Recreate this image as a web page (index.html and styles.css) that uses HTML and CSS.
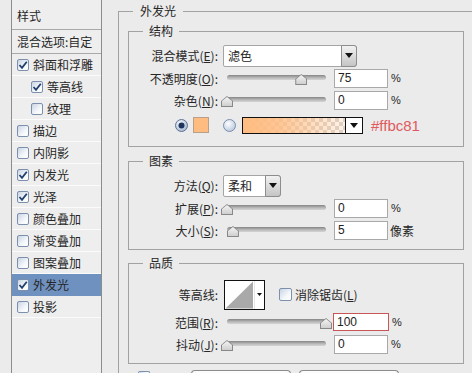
FILE: index.html
```html
<!DOCTYPE html>
<html lang="zh-CN">
<head>
<meta charset="utf-8">
<link rel="stylesheet" href="styles.css">
</head>
<body>
<div class="dialog">
  <div class="styles-panel">
    <div class="sp-head">样式</div>
    <div class="sp-blend">混合选项:自定</div>
    <ul class="sp-list">
      <li class="sp-item"><span class="cb on"><svg width="10" height="10" viewBox="0 0 10 10"><path d="M1.5 5 L4 7.8 L8.8 1.8" fill="none" stroke="#1f3f6e" stroke-width="1.8"/></svg></span>斜面和浮雕</li>
      <li class="sp-item sub"><span class="cb on"><svg width="10" height="10" viewBox="0 0 10 10"><path d="M1.5 5 L4 7.8 L8.8 1.8" fill="none" stroke="#1f3f6e" stroke-width="1.8"/></svg></span>等高线</li>
      <li class="sp-item sub"><span class="cb"></span>纹理</li>
      <li class="sp-item"><span class="cb"></span>描边</li>
      <li class="sp-item"><span class="cb"></span>内阴影</li>
      <li class="sp-item"><span class="cb on"><svg width="10" height="10" viewBox="0 0 10 10"><path d="M1.5 5 L4 7.8 L8.8 1.8" fill="none" stroke="#1f3f6e" stroke-width="1.8"/></svg></span>内发光</li>
      <li class="sp-item"><span class="cb on"><svg width="10" height="10" viewBox="0 0 10 10"><path d="M1.5 5 L4 7.8 L8.8 1.8" fill="none" stroke="#1f3f6e" stroke-width="1.8"/></svg></span>光泽</li>
      <li class="sp-item"><span class="cb"></span>颜色叠加</li>
      <li class="sp-item"><span class="cb"></span>渐变叠加</li>
      <li class="sp-item"><span class="cb"></span>图案叠加</li>
      <li class="sp-item active"><span class="cb on"><svg width="10" height="10" viewBox="0 0 10 10"><path d="M1.5 5 L4 7.8 L8.8 1.8" fill="none" stroke="#1f3f6e" stroke-width="1.8"/></svg></span>外发光</li>
      <li class="sp-item"><span class="cb"></span>投影</li>
    </ul>
  </div>

  <fieldset class="group outer">
    <legend>外发光</legend>

    <fieldset class="group sec sec-structure">
      <legend>结构</legend>
      <div class="row row-sel">
        <span class="lbl">混合模式(<u>E</u>):</span>
        <div class="select sel-wide"><span class="sel-text">滤色</span><span class="sel-btn"><i class="tri"></i></span></div>
      </div>
      <div class="row">
        <span class="lbl">不透明度(<u>O</u>):</span>
        <div class="slider"><div class="track"></div><span class="thumb" style="left:75%"></span></div>
        <div class="num">75</div><span class="unit">%</span>
      </div>
      <div class="row">
        <span class="lbl">杂色(<u>N</u>):</span>
        <div class="slider"><div class="track"></div><span class="thumb" style="left:0%"></span></div>
        <div class="num">0</div><span class="unit">%</span>
      </div>
      <div class="row row-color">
        <svg class="radio" width="13" height="13" viewBox="0 0 13 13"><defs><radialGradient id="rg1" cx="0.4" cy="0.35" r="0.7"><stop offset="0" stop-color="#ffffff"/><stop offset="1" stop-color="#9fb2cc"/></radialGradient></defs><circle cx="6.5" cy="6.5" r="6" fill="url(#rg1)" stroke="#5f7598"/><circle cx="6.5" cy="6.5" r="3" fill="#1c355c"/></svg>
        <span class="swatch"></span>
        <svg class="radio radio2" width="13" height="13" viewBox="0 0 13 13"><defs><radialGradient id="rg2" cx="0.4" cy="0.35" r="0.7"><stop offset="0" stop-color="#ffffff"/><stop offset="1" stop-color="#b6c6dc"/></radialGradient></defs><circle cx="6.5" cy="6.5" r="6" fill="url(#rg2)" stroke="#7a8fae"/></svg>
        <div class="gradbox"><span class="grad-btn"><i class="tri"></i></span></div>
        <span class="hex">#ffbc81</span>
      </div>
    </fieldset>

    <fieldset class="group sec sec-elements">
      <legend>图素</legend>
      <div class="row row-sel">
        <span class="lbl">方法(<u>Q</u>):</span>
        <div class="select sel-narrow"><span class="sel-text">柔和</span><span class="sel-btn"><i class="tri"></i></span></div>
      </div>
      <div class="row">
        <span class="lbl">扩展(<u>P</u>):</span>
        <div class="slider"><div class="track"></div><span class="thumb" style="left:0%"></span></div>
        <div class="num">0</div><span class="unit">%</span>
      </div>
      <div class="row">
        <span class="lbl">大小(<u>S</u>):</span>
        <div class="slider"><div class="track"></div><span class="thumb" style="left:6%"></span></div>
        <div class="num">5</div><span class="unit unit-cjk">像素</span>
      </div>
    </fieldset>

    <fieldset class="group sec sec-quality">
      <legend>品质</legend>
      <div class="row row-contour">
        <span class="lbl">等高线:</span>
        <svg class="contour" width="41" height="30" viewBox="0 0 41 30">
          <rect x="0.5" y="0.5" width="40" height="29" fill="#ffffff" stroke="#111"/>
          <polygon points="1.5,28.5 29,1.5 29,28.5" fill="#a9a9a9"/>
          <line x1="30.5" y1="1" x2="30.5" y2="29" stroke="#e6e6e6"/>
          <polygon points="33,13 38,13 35.5,16" fill="#111"/>
        </svg>
        <span class="cb cb-aa"></span>
        <span class="aa-lbl">消除锯齿(<u>L</u>)</span>
      </div>
      <div class="row">
        <span class="lbl">范围(<u>R</u>):</span>
        <div class="slider"><div class="track"></div><span class="thumb" style="left:100%"></span></div>
        <div class="num num-focus">100</div><span class="unit">%</span>
      </div>
      <div class="row">
        <span class="lbl">抖动(<u>J</u>):</span>
        <div class="slider"><div class="track"></div><span class="thumb" style="left:0%"></span></div>
        <div class="num">0</div><span class="unit">%</span>
      </div>
    </fieldset>

    <div class="bottom-row">
      <span class="cb cb-bottom"></span>
      <span class="btn"></span>
      <span class="btn"></span>
    </div>
  </fieldset>
</div>
</body>
</html>
```
FILE: styles.css
```css
* { box-sizing: border-box; }
html, body { margin: 0; padding: 0; }
body {
  background: #ebebeb;
  font-family: "Noto Sans CJK SC", "Noto Sans", sans-serif;
  font-size: 12px;
  color: #262626;
  width: 472px;
  height: 373px;
  overflow: hidden;
}
.dialog { display: flex; align-items: flex-start; height: 373px; }

/* left styles list */
.styles-panel {
  flex: none;
  margin-left: 11px;
  width: 91px;
  height: 373px;
  border: 1px solid #8c8c8c;
  border-top: 0;
  border-bottom: 0;
  background: #eeeeee;
}
.sp-head {
  height: 30px;
  line-height: 32px;
  padding-left: 5px;
  border-bottom: 1px solid #a9a9a9;
}
.sp-blend {
  height: 24px;
  line-height: 23px;
  padding-left: 5px;
  border-bottom: 1px solid #a9a9a9;
  white-space: nowrap;
}
.sp-list { list-style: none; margin: 0; padding: 0; }
.sp-item {
  height: 22px;
  display: flex;
  align-items: center;
  gap: 4px;
  padding-left: 5px;
  border-bottom: 1px solid #fbfbfb;
  white-space: nowrap;
}
.sp-item.sub { padding-left: 19px; }
.sp-item.active { background: #6f91c0; border-bottom-color: #6f91c0; }

.cb {
  flex: none;
  width: 12px;
  height: 12px;
  border: 1px solid #7c90ad;
  border-radius: 2px;
  background: linear-gradient(135deg, #c9d4e3 0%, #f4f7fb 60%, #ffffff 100%);
  display: inline-flex;
  align-items: center;
  justify-content: center;
}
.cb svg { display: block; }

/* group boxes */
.group {
  border: 1px solid #a2a2a2;
  margin: 0;
  padding: 0;
  min-width: 0;
}
.group > legend {
  padding: 0 7px;
  margin-left: 14px;
  line-height: 14px;
  font-size: 12px;
}
.outer {
  flex: none;
  margin: 4px 0 0 16px;
  width: 354px;
  height: 369px;
  padding: 6px 0 0 0;
  border-right: 0;
  border-bottom: 0;
}
.sec { width: 336px; margin-left: 9px; }
.sec > legend { padding: 0 6px; }
.sec-structure { padding: 6px 0 9px 0; }
.sec-elements { margin-top: 7px; padding: 6px 0 8px 0; }
.sec-quality { margin-top: 6px; padding: 8px 0 8px 0; }

.row { display: flex; align-items: center; height: 22px; white-space: nowrap; }
.row-sel { height: 23px; }
.row-color { height: 24px; margin-top: 2px; padding-left: 46px; }
.row-contour { height: 33px; }

.lbl { flex: none; width: 89px; text-align: right; }
.lbl u, .aa-lbl u { text-decoration: underline; }

/* select */
.select {
  flex: none;
  margin-left: 5px;
  height: 22px;
  display: flex;
  background: #ffffff;
  border: 1px solid #a5a5a5;
  border-radius: 2px 3px 3px 2px;
}
.sel-wide { width: 134px; }
.sel-narrow { width: 58px; }
.sel-text { flex: 1; padding-left: 4px; line-height: 20px; }
.sel-btn {
  flex: none;
  width: 16px;
  margin: -1px -1px -1px 0;
  border: 1px solid #8d8d8d;
  border-radius: 0 3px 3px 0;
  background: linear-gradient(#f2f2f2, #c4c4c4);
  display: flex;
  align-items: center;
  justify-content: center;
}
.tri {
  display: block;
  width: 0;
  height: 0;
  border-left: 4px solid transparent;
  border-right: 4px solid transparent;
  border-top: 5px solid #111;
}

/* slider */
.slider {
  flex: none;
  position: relative;
  margin-left: 9px;
  width: 99px;
  height: 22px;
  padding-top: 8px;
}
.track {
  height: 5px;
  border-radius: 3px;
  background: linear-gradient(#858585, #bdbdbd 60%, #d4d4d4);
}
.thumb {
  position: absolute;
  top: 7px;
  width: 12px;
  height: 11px;
  margin-left: -6px;
  background: #888888;
  clip-path: polygon(50% 0, 100% 45%, 100% 100%, 0 100%, 0 45%);
}
.thumb::after {
  content: "";
  position: absolute;
  left: 1px; top: 1px; right: 1px; bottom: 1px;
  background: linear-gradient(#f4f4f4, #cfcfcf);
  clip-path: polygon(50% 0, 100% 45%, 100% 100%, 0 100%, 0 45%);
}

/* numeric inputs */
.num {
  flex: none;
  margin-left: 8px;
  width: 54px;
  height: 19px;
  background: #ffffff;
  border: 1px solid #a9a9a9;
  padding-left: 3px;
  font-family: "Liberation Sans", Arial, sans-serif;
  font-size: 12px;
  line-height: 17px;
  color: #222;
}
.num-focus { border-color: #c95656; margin-left: 7px; width: 56px; height: 18px; }
.unit {
  margin-left: 3px;
  font-family: "Liberation Sans", Arial, sans-serif;
  font-size: 11px;
}
.unit-cjk { font-family: "Noto Sans CJK SC", sans-serif; font-size: 12px; margin-left: 2px; }

/* color row */
.radio { flex: none; display: block; }
.swatch {
  flex: none;
  margin-left: 5px;
  width: 16px;
  height: 16px;
  background: #ffbc81;
  border: 1px solid #b9a08a;
}
.radio2 { margin-left: 14px; }
.gradbox {
  flex: none;
  margin-left: 6px;
  width: 121px;
  height: 17px;
  border: 1px solid #111;
  display: flex;
  justify-content: flex-end;
  background:
    linear-gradient(to right, #ffbc81 0%, rgba(255,188,129,0.85) 30%, rgba(255,188,129,0) 100%),
    conic-gradient(#d6d6d6 25%, #ffffff 0 50%, #d6d6d6 0 75%, #ffffff 0) 0 0 / 8px 8px;
}
.grad-btn {
  width: 17px;
  background: #ffffff;
  border-left: 1px solid #111;
  display: flex;
  align-items: center;
  justify-content: center;
}
.hex {
  margin-left: 8px;
  font-family: "Liberation Sans", Arial, sans-serif;
  font-size: 15px;
  color: #e05a5e;
}

/* quality */
.contour { flex: none; display: block; margin-left: 6px; }
.cb-aa { margin-left: 14px; width: 13px; height: 13px; }
.aa-lbl { margin-left: 3px; }

/* tops of the controls below the visible area */
.bottom-row { display: flex; align-items: flex-start; margin-top: 6px; height: 4px; }
.cb-bottom { margin-left: 19px; margin-top: 1px; height: 3px; border-bottom: 0; border-radius: 2px 2px 0 0; }
.btn {
  flex: none;
  width: 100px;
  height: 4px;
  border: 1px solid #8a8a8a;
  border-bottom: 0;
  border-radius: 4px 4px 0 0;
  background: linear-gradient(#ffffff, #f6f6f6);
}
.cb-bottom + .btn { margin-left: 41px; }
.btn + .btn { margin-left: 8px; }
```
